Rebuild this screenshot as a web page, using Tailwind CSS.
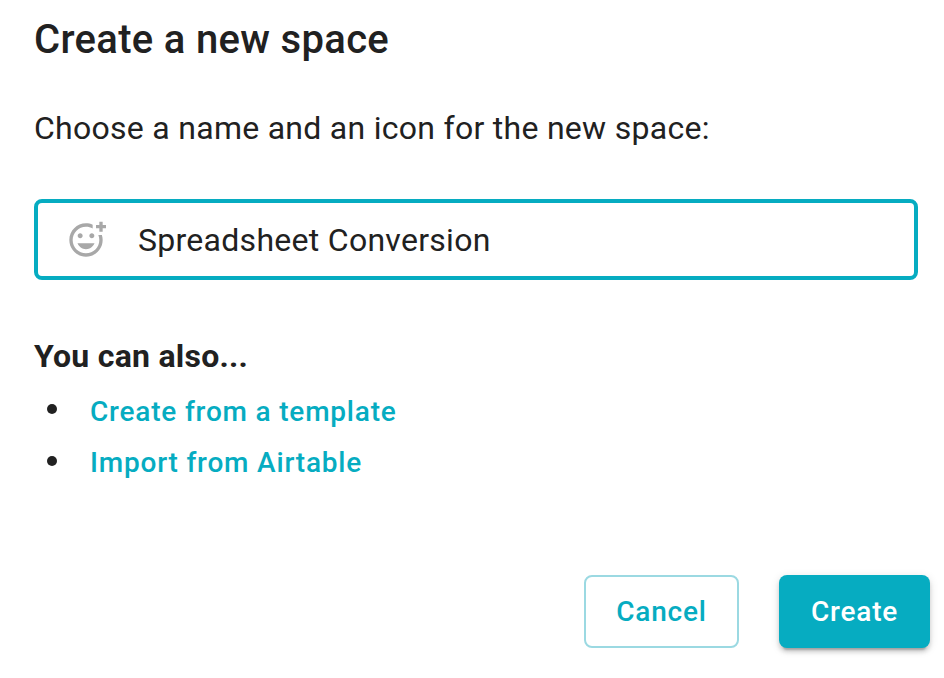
<!DOCTYPE html>
<html lang="en">
<head>
  <meta charset="UTF-8">
  <meta name="viewport" content="width=device-width, initial-scale=1.0">
  <title>Create a new space</title>
  <script src="https://cdn.jsdelivr.net/npm/@tailwindcss/browser@4"></script>
</head>

<body class="bg-white text-[#212121] font-[Roboto,sans-serif] overflow-hidden">
  <div class="w-[944px] h-[678px] pl-[34px] pr-[14px] pt-4 flex flex-col">
    <h1 class="text-[40px] leading-[48px] font-medium tracking-[0.32px]">Create a new space</h1>
    <p class="mt-10 text-[32px] leading-[48px] tracking-[0.28px]">Choose a name and an icon for the new space:</p>

    <!-- name field -->
    <div class="mt-[47px] mr-3 h-[81px] border-4 border-[#06acc1] rounded-lg flex items-center pl-7">
      <svg class="w-10 h-10 shrink-0 text-[#a8a8a8]" viewBox="0 0 24 24" fill="currentColor">
        <path d="M7 9.5C7 8.67 7.67 8 8.5 8s1.5.67 1.5 1.5S9.33 11 8.5 11 7 10.33 7 9.5zm5 8c2.33 0 4.31-1.46 5.11-3.5H6.89c.8 2.04 2.78 3.5 5.11 3.5zm3.5-6.5c.83 0 1.5-.67 1.5-1.5S16.33 8 15.5 8 14 8.67 14 9.5s.67 1.5 1.5 1.5zM22 1h-2v2h-2v2h2v2h2V5h2V3h-2V1zm-2 11c0 4.42-3.58 8-8 8s-8-3.58-8-8 3.58-8 8-8c1.46 0 2.82.4 4 1.08V2.84C14.77 2.3 13.42 2 11.99 2 6.47 2 2 6.48 2 12s4.47 10 9.99 10C17.52 22 22 17.52 22 12c0-1.05-.17-2.05-.47-3h-2.13c.38.93.6 1.94.6 3z"/>
      </svg>
      <input type="text" id="spaceName" value="Spreadsheet Conversion" class="ml-8 flex-1 text-[32px] tracking-[0.28px] outline-none">
    </div>

    <h2 class="mt-[52px] text-[32px] leading-[48px] font-bold tracking-[0.25px]">You can also...</h2>
    <ul class="mt-[6px] text-[28px] font-medium tracking-[0.8px] text-[#06acc1]">
      <li class="h-[51px] flex items-center"><span class="ml-[13px] mr-[33px] mb-[5px] w-2.5 h-2.5 rounded-full bg-[#212121]"></span><a href="#">Create from a template</a></li>
      <li class="h-[51px] flex items-center"><span class="ml-[13px] mr-[33px] mb-[3px] w-2.5 h-2.5 rounded-full bg-[#212121]"></span><a href="#">Import from Airtable</a></li>
    </ul>

    <div class="mt-[87px] flex justify-end gap-10 text-[28px] font-medium tracking-[0.8px]">
      <button class="w-[155px] h-[73px] border-2 border-[#9bd9e2] rounded-lg text-[#06acc1]">Cancel</button>
      <button class="w-[151px] h-[73px] rounded-lg bg-[#06acc1] text-white shadow-[0_6px_2px_-4px_rgba(0,0,0,0.2),0_4px_4px_0_rgba(0,0,0,0.14),0_2px_10px_0_rgba(0,0,0,0.12)]">Create</button>
    </div>
  </div>
</body>
</html>
